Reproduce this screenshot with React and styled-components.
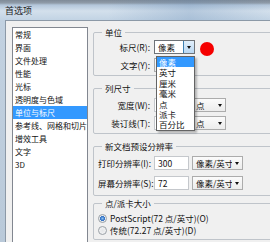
import React from 'react'
import styled, { createGlobalStyle } from 'styled-components'

const Global = createGlobalStyle`
  html, body { margin: 0; padding: 0; background: #fff; }
  body { font-family: "Noto Sans CJK SC", "Noto Sans", sans-serif; }
`

const categories = [
  '常规', '界面', '文件处理', '性能', '光标', '透明度与色域',
  '单位与标尺', '参考线、网格和切片', '增效工具', '文字', '3D',
]

const units = ['像素', '英寸', '厘米', '毫米', '点', '派卡', '百分比']

const App = () => {
  return (
    <Window>
      <Global />
      <TitleBar>
        <Title>首选项</Title>
      </TitleBar>
      <Frame>
        <Body>
          <ListBox>
            {categories.map((c) => (
              <ListItem key={c} $selected={c === '单位与标尺'}>{c}</ListItem>
            ))}
          </ListBox>

          <RightPane>
            <Group>
              <Legend>单位</Legend>
              <Rows $gap={4}>
                <Row>
                  <RightLabel>标尺(R):</RightLabel>
                  <ComboHolder>
                    <Combo $w={41} $open>
                      <ComboText>像素</ComboText>
                      <ComboButton $open><Arrow /></ComboButton>
                    </Combo>
                    <DropList>
                      {units.map((u, i) => (
                        <DropItem key={u} $active={i === 0}>{u}</DropItem>
                      ))}
                    </DropList>
                  </ComboHolder>
                  <RedDot />
                </Row>
                <Row>
                  <RightLabel>文字(Y):</RightLabel>
                  <Combo $w={41}>
                    <ComboText />
                    <ComboButton><Arrow /></ComboButton>
                  </Combo>
                </Row>
              </Rows>
            </Group>

            <Group $top={7}>
              <Legend>列尺寸</Legend>
              <Rows $gap={4} $pt={4}>
                <Row>
                  <RightLabel>宽度(W):</RightLabel>
                  <Input $w={35} />
                  <Combo $w={34} $ml={3}>
                    <ComboText>点</ComboText>
                    <ComboButton $plain><Arrow /></ComboButton>
                  </Combo>
                </Row>
                <Row>
                  <RightLabel>装订线(T):</RightLabel>
                  <Input $w={35} />
                  <Combo $w={34} $ml={3}>
                    <ComboText>点</ComboText>
                    <ComboButton $plain><Arrow /></ComboButton>
                  </Combo>
                </Row>
              </Rows>
            </Group>

            <Group $top={7}>
              <Legend>新文档预设分辨率</Legend>
              <Rows $gap={6} $pt={4} $pb={5}>
                <Row>
                  <LeftLabel>打印分辨率(I):</LeftLabel>
                  <Input $w={35}>300</Input>
                  <Combo $w={51} $ml={3}>
                    <ComboText>像素/英寸</ComboText>
                    <ComboButton $plain><Arrow /></ComboButton>
                  </Combo>
                </Row>
                <Row>
                  <LeftLabel>屏幕分辨率(S):</LeftLabel>
                  <Input $w={35}>72</Input>
                  <Combo $w={51} $ml={3}>
                    <ComboText>像素/英寸</ComboText>
                    <ComboButton $plain><Arrow /></ComboButton>
                  </Combo>
                </Row>
              </Rows>
            </Group>

            <Group $top={2}>
              <Legend>点/派卡大小</Legend>
              <Rows $gap={0} $pt={3}>
                <RadioRow>
                  <Radio $checked />
                  <span>PostScript(72 点/英寸)(O)</span>
                </RadioRow>
                <RadioRow>
                  <Radio />
                  <span>传统(72.27 点/英寸)(D)</span>
                </RadioRow>
              </Rows>
            </Group>
          </RightPane>
        </Body>
      </Frame>
    </Window>
  )
}

export default App

const Window = styled.div`
  width: 270px;
  height: 242px;
  overflow: hidden;
  display: flex;
  flex-direction: column;
  background: linear-gradient(to bottom, #c3d2e1, #b9c9d9);
  color: #111;
  font-size: 8.5px;
`

const TitleBar = styled.div`
  height: 20px;
  flex: none;
  display: flex;
  align-items: center;
  padding-left: 5px;
  background:
    linear-gradient(to right, rgba(255, 255, 255, 0) 40%, rgba(90, 130, 175, 0.25) 70%, rgba(255, 255, 255, 0) 100%),
    linear-gradient(to bottom, #7f8b98 0, #8f9ba8 3px, #b3c6da 5px, #d3e0ec 11px, #c2d3e4 20px);
`

const Title = styled.span`
  font-size: 9px;
  color: #1c1c1c;
  margin-top: 1px;
`

const Frame = styled.div`
  flex: 1;
  display: flex;
  padding-left: 5px;
  min-height: 0;
`

const Body = styled.div`
  flex: 1;
  display: flex;
  align-items: flex-start;
  background: #f0f0f0;
  border-left: 1px solid #8c99a7;
  border-top: 1px solid #8c99a7;
  padding: 6px 0 0 6px;
`

const ListBox = styled.div`
  flex: none;
  width: 74px;
  height: 230px;
  background: #fff;
  border: 1px solid #828790;
  font-size: 8px;
`

const ListItem = styled.div`
  height: 13px;
  line-height: 13px;
  padding-left: 2px;
  white-space: nowrap;
  overflow: hidden;
  background: ${(p) => (p.$selected ? '#3399ff' : 'transparent')};
  color: ${(p) => (p.$selected ? '#fff' : '#111')};
`

const RightPane = styled.div`
  flex: none;
  width: 200px;
  margin-left: 5px;
  display: flex;
  flex-direction: column;
`

const Group = styled.fieldset`
  margin: ${(p) => p.$top || 0}px 0 0 0;
  padding: 0;
  border: 1px solid #bfc4ca;
  border-radius: 2px;
  min-width: 0;
`

const Legend = styled.legend`
  margin-left: 8px;
  padding: 0 3px;
  line-height: 11px;
  font-size: 8.5px;
  color: #111;
`

const Rows = styled.div`
  display: flex;
  flex-direction: column;
  gap: ${(p) => p.$gap}px;
  padding: ${(p) => (p.$pt ?? 2)}px 0 ${(p) => (p.$pb ?? 3)}px 0;
`

const Row = styled.div`
  display: flex;
  align-items: flex-start;
  height: 14px;
`

const RightLabel = styled.div`
  width: 56px;
  margin-right: 4px;
  text-align: right;
  line-height: 14px;
  white-space: nowrap;
`

const LeftLabel = styled.div`
  width: 56px;
  padding-left: 4px;
  line-height: 14px;
  white-space: nowrap;
`

const ComboHolder = styled.div`
  position: relative;
`

const Combo = styled.div`
  box-sizing: border-box;
  width: ${(p) => p.$w}px;
  height: 14px;
  margin-left: ${(p) => p.$ml || 0}px;
  display: flex;
  border: 1px solid ${(p) => (p.$open ? '#6e7378' : '#acacac')};
  background: ${(p) => (p.$open ? '#fff' : 'linear-gradient(to bottom, #fbfbfb, #ececec)')};
`

const ComboText = styled.div`
  flex: 1;
  padding-left: 3px;
  line-height: 12px;
  white-space: nowrap;
  overflow: hidden;
`

const ComboButton = styled.div`
  width: 10px;
  display: flex;
  align-items: center;
  justify-content: center;
  border-left: ${(p) => (p.$plain ? 'none' : '1px solid ' + (p.$open ? '#3c7fb1' : '#c8c8c8'))};
  background: ${(p) => (p.$open ? 'linear-gradient(to bottom, #e1effb, #b9d8f3)' : 'transparent')};
`

const Arrow = styled.div`
  width: 0;
  height: 0;
  border-left: 2.5px solid transparent;
  border-right: 2.5px solid transparent;
  border-top: 3px solid #111;
`

const DropList = styled.div`
  position: absolute;
  left: 2px;
  top: 16px;
  width: 39px;
  box-sizing: border-box;
  background: #fff;
  border: 1px solid #646464;
  box-shadow: 2px 2px 2px rgba(0, 0, 0, 0.25);
  z-index: 2;
`

const DropItem = styled.div`
  height: 10.4px;
  line-height: 10.4px;
  padding-left: 2px;
  background: ${(p) => (p.$active ? '#3399ff' : 'transparent')};
  color: ${(p) => (p.$active ? '#fff' : '#111')};
`

const RedDot = styled.div`
  width: 14px;
  height: 14px;
  border-radius: 50%;
  background: #f50000;
  margin: 2px 0 0 5px;
`

const Input = styled.div`
  box-sizing: border-box;
  width: ${(p) => p.$w}px;
  height: 14px;
  padding-left: 3px;
  line-height: 12px;
  background: #fff;
  border: 1px solid #c5c8cc;
`

const RadioRow = styled.div`
  display: flex;
  align-items: center;
  height: 12px;
  padding-left: 4px;
  white-space: nowrap;
  gap: 3px;
`

const Radio = styled.div`
  width: 7px;
  height: 7px;
  border-radius: 50%;
  border: 1px solid #9aa0a6;
  background: ${(p) =>
    p.$checked
      ? 'radial-gradient(circle, #8fc2f0 0, #2f6fc4 2.2px, #e8ecf0 2.8px, #f4f4f4 100%)'
      : 'radial-gradient(circle, #e4e6e8 0, #f6f6f6 100%)'};
`
